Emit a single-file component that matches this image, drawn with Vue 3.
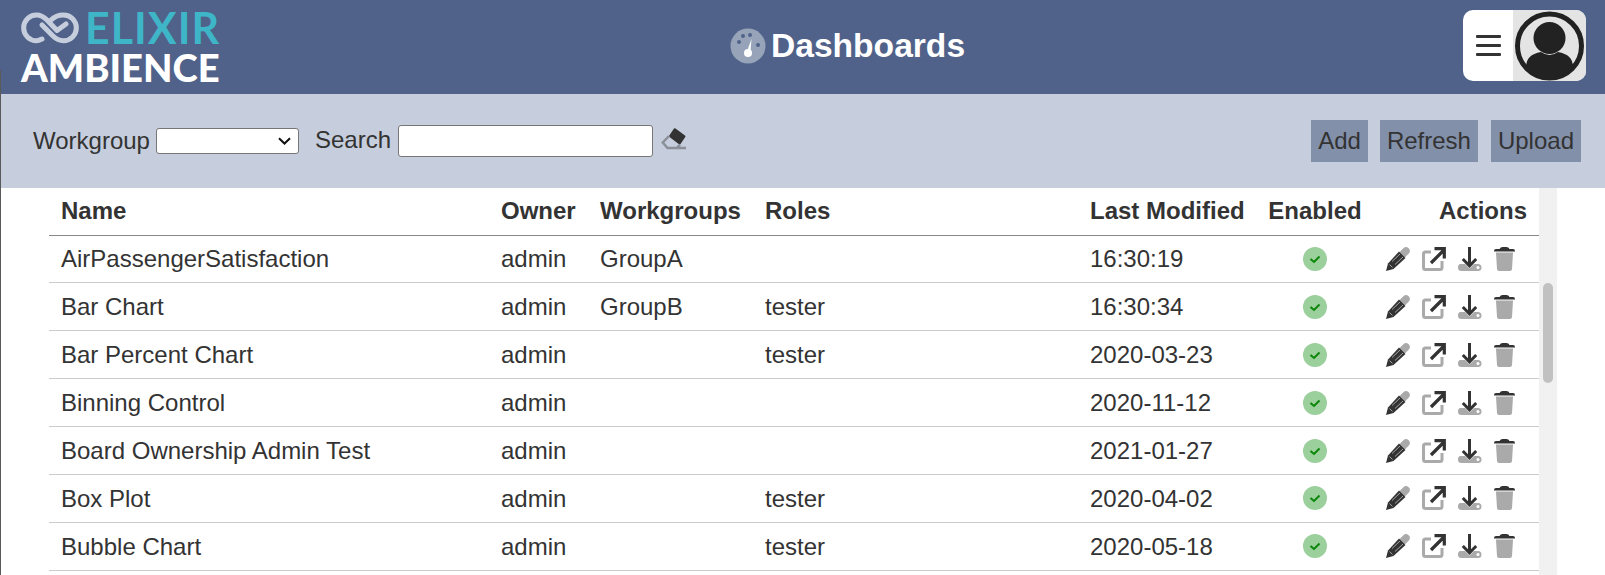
<script setup>
const rows = [
  { name: 'AirPassengerSatisfaction', groups: 'GroupA', roles: '', modified: '16:30:19' },
  { name: 'Bar Chart', groups: 'GroupB', roles: 'tester', modified: '16:30:34' },
  { name: 'Bar Percent Chart', groups: '', roles: 'tester', modified: '2020-03-23' },
  { name: 'Binning Control', groups: '', roles: '', modified: '2020-11-12' },
  { name: 'Board Ownership Admin Test', groups: '', roles: '', modified: '2021-01-27' },
  { name: 'Box Plot', groups: '', roles: 'tester', modified: '2020-04-02' },
  { name: 'Bubble Chart', groups: '', roles: 'tester', modified: '2020-05-18' }
]
</script>

<template>
  <div class="page">
    <header class="top">
      <div class="logo">
        <div class="logo-row">
          <svg class="logo-mark" width="58" height="32" viewBox="0 0 58 32" fill="none" stroke="#c6cddc" stroke-width="5" stroke-linecap="round" stroke-linejoin="round">
            <path d="M21 27 C18 28.500 16 28.700 15.500 28.700 A12.800 12.800 0 0 1 15.500 3 C20 3 23 5 26 8 L36 18.500 L45 12" />
            <path d="M30 8 C33 5 38 3 42.500 3 A12.800 12.800 0 0 1 42.500 28.700 C38 28.700 35 27 32 24 L21 13" />
          </svg>
          <span class="logo-a">ELIXIR</span>
        </div>
        <div class="logo-b">AMBIENCE</div>
      </div>
      <div class="title">
        <svg width="36" height="36" viewBox="0 0 36 36">
          <circle cx="18" cy="18" r="17.500" fill="#97a3b9" />
          <circle cx="9" cy="14" r="2" fill="#50628a" />
          <circle cx="13" cy="8" r="2" fill="#50628a" />
          <circle cx="20" cy="7" r="2" fill="#50628a" />
          <circle cx="28" cy="17" r="2" fill="#50628a" />
          <path d="M21.500 11 L17.500 22 L20.500 23 Z" fill="#fff" />
          <circle cx="18" cy="25" r="4" fill="#fff" />
        </svg>
        <span>Dashboards</span>
      </div>
      <div class="menu">
        <div class="burger"><i></i><i></i><i></i></div>
        <div class="avatar">
          <svg width="73" height="71" viewBox="0 0 73 71">
            <circle cx="36.500" cy="36" r="32" fill="none" stroke="#222" stroke-width="5" />
            <circle cx="36.500" cy="28" r="16" fill="#222" />
            <path d="M13 58 C13 48 18 44 28 42 Q36.500 48 45 42 C55 44 60 48 60 58 A32 32 0 0 1 13 58 Z" fill="#222" />
          </svg>
        </div>
      </div>
    </header>

    <section class="filters">
      <label class="label">Workgroup</label>
      <select class="select"></select>
      <label class="label search-label">Search</label>
      <input class="search" type="text" />
      <svg class="eraser" width="26" height="24" viewBox="0 0 26 24">
        <path d="M13 1.500 Q13.800 1 14.500 1.500 L24 8.500 Q24.800 9.200 24.300 10 L19.500 17 Q19 17.800 18 17.200 L8.500 10 Q7.700 9.300 8.300 8.500 Z" fill="#333" />
        <path d="M8 9 L1.800 15.500 L6.500 21 H16 L19 17.500 M6.500 21 H25" fill="none" stroke="#8a8f99" stroke-width="2.500" />
      </svg>
      <div class="buttons">
        <button class="btn">Add</button>
        <button class="btn">Refresh</button>
        <button class="btn">Upload</button>
      </div>
    </section>

    <main class="content">
      <table class="grid">
        <colgroup>
          <col class="c-name" /><col class="c-owner" /><col class="c-groups" /><col class="c-roles" />
          <col class="c-mod" /><col class="c-en" /><col class="c-act" />
        </colgroup>
        <thead>
          <tr>
            <th>Name</th><th>Owner</th><th>Workgroups</th><th>Roles</th>
            <th>Last Modified</th><th class="center">Enabled</th><th class="right">Actions</th>
          </tr>
        </thead>
        <tbody>
          <tr v-for="r in rows" :key="r.name">
            <td>{{ r.name }}</td>
            <td>admin</td>
            <td>{{ r.groups }}</td>
            <td>{{ r.roles }}</td>
            <td>{{ r.modified }}</td>
            <td class="center">
              <svg class="ok" width="24" height="24" viewBox="0 0 24 24">
                <circle cx="12" cy="12" r="12" fill="#9bcf9b" />
                <path d="M7.500 12 L11 15 L16.500 9.500" fill="none" stroke="#0b860b" stroke-width="2" />
              </svg>
            </td>
            <td class="act-cell">
              <div class="actions">
                <svg width="24" height="24" viewBox="0 0 24 24">
                  <path d="M17 7 L20 4" stroke="#aaa" stroke-width="7.500" stroke-linecap="round" fill="none" />
                  <path d="M13 4.500 L19.500 11 L7.500 22 L0 24 L2 16.500 Z" fill="#333" />
                  <path d="M3.500 17.500 L6.500 20.500 M6 14.500 L14 7 M9 17.500 L17 10" stroke="#fff" stroke-width="0.800" stroke-opacity="0.700" fill="none" />
                </svg>
                <svg width="24" height="24" viewBox="0 0 24 24">
                  <path d="M9 5 H3.500 Q1.500 5 1.500 7 V20.500 Q1.500 22.500 3.500 22.500 H18 Q20 22.500 20 20.500 V14" fill="none" stroke="#aaa" stroke-width="3" />
                  <path d="M9 16 L22 3 M12.500 1.700 H22.300 V11.500" fill="none" stroke="#333" stroke-width="3.200" />
                </svg>
                <svg width="24" height="24" viewBox="0 0 24 24">
                  <path d="M2.500 17 H7 L11.500 21.500 L16 17 H20 Q23.500 17 23.500 20.500 Q23.500 24 20 24 H3.500 Q0 24 0 20.500 Q0 17 2.500 17 Z" fill="#aaa" />
                  <path d="M11.500 0 V17 M4.800 12 L11.500 18.800 L18.200 12" fill="none" stroke="#333" stroke-width="3" />
                  <circle cx="20" cy="20.500" r="1.500" fill="#fff" />
                </svg>
                <svg width="21" height="24" viewBox="0 0 21 24">
                  <path d="M0 4 Q0 2 2 2 H5.500 Q6.500 0 8.500 0 H12.500 Q14.500 0 15.500 2 H19 Q21 2 21 4 V4.500 H0 Z" fill="#333" />
                  <path d="M2 5.500 H19 L18 22 Q17.800 24 16 24 H5 Q3.200 24 3 22 Z" fill="#aaa" />
                </svg>
              </div>
            </td>
          </tr>
        </tbody>
      </table>
      <div class="track"><div class="thumb"></div></div>
    </main>
  </div>
</template>

<style>
html, body { margin: 0; overflow: hidden; background: #fff; }
</style>

<style scoped>
.page {
  height: 575px;
  overflow: hidden;
  position: relative;
  font-family: "Liberation Sans", Arial, sans-serif;
  font-size: 24px;
  color: #333;
}
.page::after {
  content: "";
  position: absolute;
  left: 0;
  top: 70px;
  bottom: 0;
  width: 1px;
  background: #5a5a5a;
}
.top {
  height: 94px;
  background: #50628a;
  display: flex;
  align-items: flex-start;
  position: relative;
  box-sizing: border-box;
}
.logo {
  margin-left: 21px;
  padding-top: 6px;
  width: 210px;
  font-family: Lato, sans-serif;
  font-weight: 900;
}
.logo-row { display: flex; align-items: center; gap: 6px; height: 44px; }
.logo-a { color: #3fb5c8; font-size: 43px; line-height: 44px; letter-spacing: 1px; font-weight: 700; }
.logo-b { color: #fff; font-size: 38.200px; line-height: 34px; }
.title {
  margin-left: 499px;
  margin-top: 27px;
  display: flex;
  align-items: center;
  gap: 5px;
  color: #fff;
  font-size: 33.600px;
  font-weight: 700;
}
.menu {
  margin-left: auto;
  margin-right: 19px;
  margin-top: 10px;
  width: 123px;
  height: 71px;
  display: flex;
  border-radius: 10px;
  overflow: hidden;
  background: #fff;
}
.burger {
  width: 50px;
  display: flex;
  flex-direction: column;
  align-items: center;
  justify-content: center;
  gap: 6px;
}
.burger i { display: block; width: 25px; height: 3px; background: #333; border-radius: 1px; }
.avatar { width: 73px; background: #e4e4e4; }
.avatar svg { display: block; }
.filters {
  height: 94px;
  box-sizing: border-box;
  background: #c6cddc;
  display: flex;
  align-items: center;
  padding-left: 33px;
  padding-right: 24px;
}
.label { line-height: 30px; }
.select {
  margin-left: 6px;
  width: 143px;
  height: 26px;
  box-sizing: border-box;
  appearance: none;
  background: #fff url("data:image/svg+xml,%3Csvg xmlns='http://www.w3.org/2000/svg' width='13' height='8' viewBox='0 0 13 8'%3E%3Cpath d='M1 1.200 L6.500 6.500 L12 1.200' fill='none' stroke='%23111' stroke-width='2'/%3E%3C/svg%3E") no-repeat right 7px center;
  border: 1px solid #767676;
  border-radius: 3px;
  font-size: 16px;
}
.search-label { margin-left: 16px; margin-top: -2px; }
.search {
  margin-left: 7px;
  width: 255px;
  height: 32px;
  box-sizing: border-box;
  border: 1px solid #767676;
  border-radius: 3px;
  background: #fff;
  padding: 0;
}
.eraser { margin-left: 8px; margin-top: -5px; }
.buttons { margin-left: auto; display: flex; gap: 12px; }
.btn {
  height: 42px;
  padding: 0 7px;
  border: 0;
  background: #8290aa;
  color: #333;
  font: inherit;
}
.btn:last-child { margin-left: 1px; }
.content {
  display: flex;
  padding-left: 49px;
  align-items: flex-start;
}
.grid {
  width: 1490px;
  table-layout: fixed;
  border-collapse: collapse;
  flex: none;
}
.c-name { width: 439px; }
.c-owner { width: 99px; }
.c-groups { width: 165px; }
.c-roles { width: 325px; }
.c-mod { width: 178px; }
.c-en { width: 120px; }
.c-act { width: 164px; }
th, td {
  text-align: left;
  padding: 1px 0 0 13px;
  white-space: nowrap;
  box-sizing: border-box;
}
th { padding-top: 0; }
th:first-child, td:first-child { padding-left: 12px; }
th {
  height: 47px;
  font-weight: 700;
  border-bottom: 1px solid #888;
}
td {
  height: 47.900px;
  border-bottom: 1px solid #ccc;
}
th.center, td.center { text-align: center; padding: 0; }
th.right { text-align: right; padding: 0 12px 0 0; }
td.act-cell { padding: 0 0 0 11px; }
.ok { display: block; margin: 0 auto; }
.actions { display: flex; align-items: center; gap: 12px; }
.actions svg { display: block; flex: none; }
.track {
  width: 18px;
  height: 400px;
  flex: none;
  background: #f1f1f1;
  position: relative;
}
.thumb {
  position: absolute;
  left: 4px;
  top: 95px;
  width: 10px;
  height: 100px;
  background: #c1c1c1;
  border-radius: 5px;
}
</style>
